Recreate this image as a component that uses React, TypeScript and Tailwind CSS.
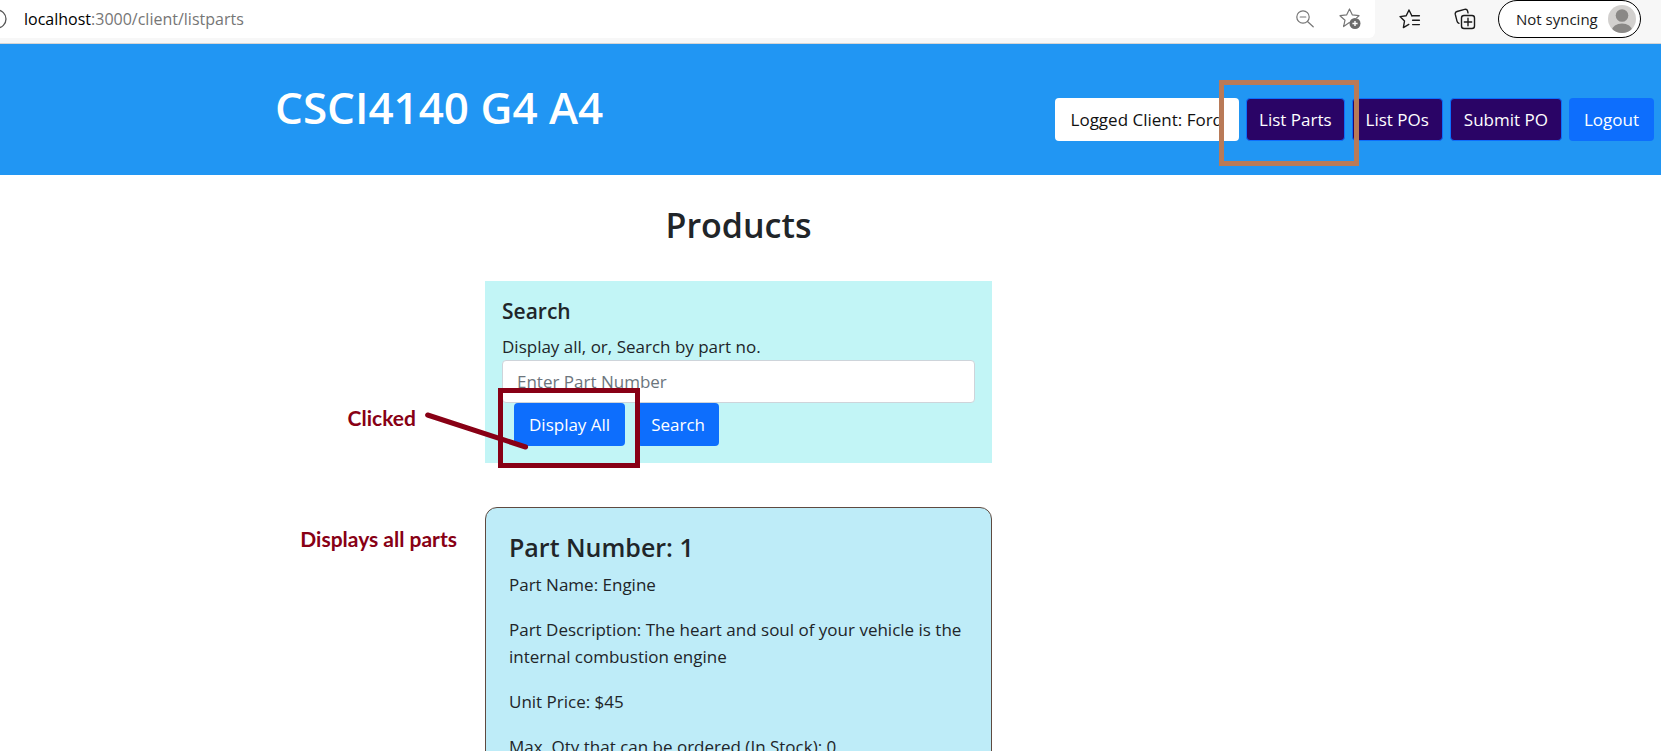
import React from "react";

function ZoomOutIcon() {
  return (
    <svg width="18" height="18" viewBox="0 0 18 18" fill="none" stroke="#767676" strokeWidth="1.2" strokeLinecap="round" aria-hidden="true">
      <circle cx="7" cy="7" r="6.2" />
      <path d="M4.2 7h5.6M11.5 11.5l5.7 5.3" />
    </svg>
  );
}

function StarAddIcon() {
  return (
    <svg width="22" height="22" viewBox="0 0 22 22" fill="none" aria-hidden="true">
      <path
        d="M10.4 14.6 4.6 18.6 6 12.2 1 7.7 7.6 6.9 10.5 1 13.4 6.9 20 7.7 17.6 9.9"
        stroke="#767676"
        strokeWidth="1.2"
        strokeLinejoin="round"
        strokeLinecap="round"
      />
      <circle cx="16" cy="15.5" r="5.5" fill="#6b6b6b" />
      <path d="M16 12.9v5.2M13.4 15.5h5.2" stroke="#fff" strokeWidth="1.4" />
    </svg>
  );
}

function FavoritesIcon() {
  return (
    <svg width="22" height="20" viewBox="0 0 22 20" fill="none" stroke="#1b1b1b" strokeWidth="1.4" strokeLinejoin="round" strokeLinecap="round" aria-hidden="true">
      <path d="M12.8 6.8 10 1 7.2 6.8 1 7.6 5.5 12 4.4 18.6 9.8 15.4" />
      <path d="M12.8 6.8H20.4M13.6 11.2H20.4M13.6 15.6H20.4" />
    </svg>
  );
}

function CollectionsIcon() {
  return (
    <svg width="22" height="22" viewBox="0 0 22 22" fill="none" stroke="#1b1b1b" strokeWidth="1.4" strokeLinejoin="round" strokeLinecap="round" aria-hidden="true">
      <path d="M5 15.4C3.8 15 3.2 14.2 3 13.2L1.3 6.4C1 5 1.6 3.9 3 3.5L10.6 1.4C12 1 13.2 1.7 13.6 3L14 4.8" />
      <rect x="7.5" y="7.5" width="13" height="13" rx="2.5" />
      <path d="M14 10.3v7.4M10.3 14h7.4" />
    </svg>
  );
}

function Avatar() {
  return (
    <svg width="28" height="28" viewBox="0 0 28 28" aria-hidden="true">
      <clipPath id="avatar-clip">
        <circle cx="14" cy="14" r="14" />
      </clipPath>
      <g clipPath="url(#avatar-clip)">
        <rect width="28" height="28" fill="#d2d0ce" />
        <circle cx="14" cy="10.5" r="6.3" fill="#8a8886" />
        <ellipse cx="14" cy="25.5" rx="10" ry="7" fill="#8a8886" />
      </g>
    </svg>
  );
}

function BrowserBar() {
  return (
    <div className="flex h-11 items-start border-b border-[#d5d5d5] bg-[#f7f7f7]">
      <div className="flex h-[38px] flex-1 items-center overflow-hidden rounded-br-md bg-white pr-[14px]">
        <svg width="7" height="20" viewBox="0 0 7 20" fill="none" stroke="#555" strokeWidth="1.3" aria-hidden="true">
          <circle cx="-3" cy="10" r="9" />
        </svg>
        <p className="flex-1 pl-[17px] text-base text-[#767676]">
          <span className="text-black">localhost</span>:3000/client/listparts
        </p>
        <div className="flex items-center gap-[25px]">
          <button type="button" aria-label="Zoom out"><ZoomOutIcon /></button>
          <button type="button" aria-label="Add to favorites"><StarAddIcon /></button>
        </div>
      </div>
      <div className="flex h-[38px] items-center pr-5 pl-6">
        <button type="button" aria-label="Favorites"><FavoritesIcon /></button>
        <button type="button" aria-label="Collections" className="ml-[33px]"><CollectionsIcon /></button>
        <button type="button" className="ml-[22px] flex h-[38px] w-[143px] items-center justify-between rounded-full border border-black bg-white pr-1 pl-[17px] text-[15px] whitespace-nowrap text-[#1b1b1b]">
          Not syncing
          <Avatar />
        </button>
      </div>
    </div>
  );
}

const navButton =
  "h-[43px] rounded border border-[#0d6efd] bg-[#2a0466] whitespace-nowrap text-white";

function Header() {
  return (
    <header className="flex h-[131px] items-center justify-between bg-[#2196f3] pr-[7px] pl-[275px]">
      <h1 className="pb-[6px] text-[44px] leading-[54px] font-semibold text-white">CSCI4140 G4 A4</h1>
      <nav className="flex gap-[7px] pt-5">
        <span className="flex h-[43px] items-center rounded bg-white px-4 whitespace-nowrap text-[#111]">
          Logged Client: Ford
        </span>
        <div className="relative">
          <button type="button" className={`${navButton} px-3`}>List Parts</button>
          <div className="pointer-events-none absolute -top-[18px] -right-[14px] -bottom-[25px] -left-[27px] z-10 border-5 border-[#b97a57]" />
        </div>
        <button type="button" className={`${navButton} px-[13px]`}>List POs</button>
        <button type="button" className={`${navButton} px-[13px]`}>Submit PO</button>
        <button type="button" className="h-[43px] rounded bg-[#0d6efd] px-[15px] text-white">Logout</button>
      </nav>
    </header>
  );
}

function SearchPanel() {
  return (
    <section className="bg-[#c2f5f6] p-[17px]">
      <h2 className="mb-2 text-[21px] leading-[27px] font-semibold">Search</h2>
      <label htmlFor="part-number" className="block leading-[27px]">Display all, or, Search by part no.</label>
      <input
        id="part-number"
        type="text"
        placeholder="Enter Part Number"
        className="block h-[43px] w-full rounded border border-[#ced4da] bg-white px-[14px] placeholder:text-[#6c757d]"
      />
      <div className="flex gap-3 pl-3">
        <div className="relative">
          <button type="button" className="h-[43px] rounded bg-[#0d6efd] px-[15px] text-white">Display All</button>
          <div className="pointer-events-none absolute -top-[15px] -right-[15px] -bottom-[22px] -left-4 z-10 border-5 border-[#880015]" />
          <div className="pointer-events-none absolute top-1 left-[15px] z-20 flex -translate-x-full items-start gap-[9px] font-['Lato',sans-serif] text-[21px] leading-[22px] font-bold text-[#880015]">
            Clicked
            <svg width="104" height="44" viewBox="0 0 104 44" fill="none" stroke="#880015" strokeWidth="5" strokeLinecap="round" aria-hidden="true">
              <path d="M3 8 101 40" />
            </svg>
          </div>
        </div>
        <button type="button" className="h-[43px] rounded bg-[#0d6efd] px-[14px] text-white">Search</button>
      </div>
    </section>
  );
}

function PartCard() {
  return (
    <article className="relative mt-11 rounded-xl border border-[#5f4a40] bg-[#beecf8] px-[23px] py-[23px]">
      <p className="absolute top-[15px] right-full mr-[29px] font-['Lato',sans-serif] text-[21px] font-bold whitespace-nowrap text-[#880015]">
        Displays all parts
      </p>
      <h2 className="mb-2 text-[25px] leading-8 font-semibold">Part Number: 1</h2>
      <div className="space-y-[18px] leading-[27px]">
        <p>Part Name: Engine</p>
        <p>Part Description: The heart and soul of your vehicle is the internal combustion engine</p>
        <p>Unit Price: $45</p>
        <p>Max. Qty that can be ordered (In Stock): 0</p>
      </div>
    </article>
  );
}

export default function App() {
  return (
    <div className="h-screen overflow-hidden bg-white font-['Open_Sans','Noto_Sans',sans-serif] text-[17px] text-[#212529]">
      <BrowserBar />
      <Header />
      <main className="flex justify-center pr-[184px] pt-[29px]">
        <div className="w-full max-w-[507px]">
          <h1 className="mb-[35px] text-center text-[34px] leading-[42px] font-semibold">Products</h1>
          <SearchPanel />
          <PartCard />
        </div>
      </main>
    </div>
  );
}
